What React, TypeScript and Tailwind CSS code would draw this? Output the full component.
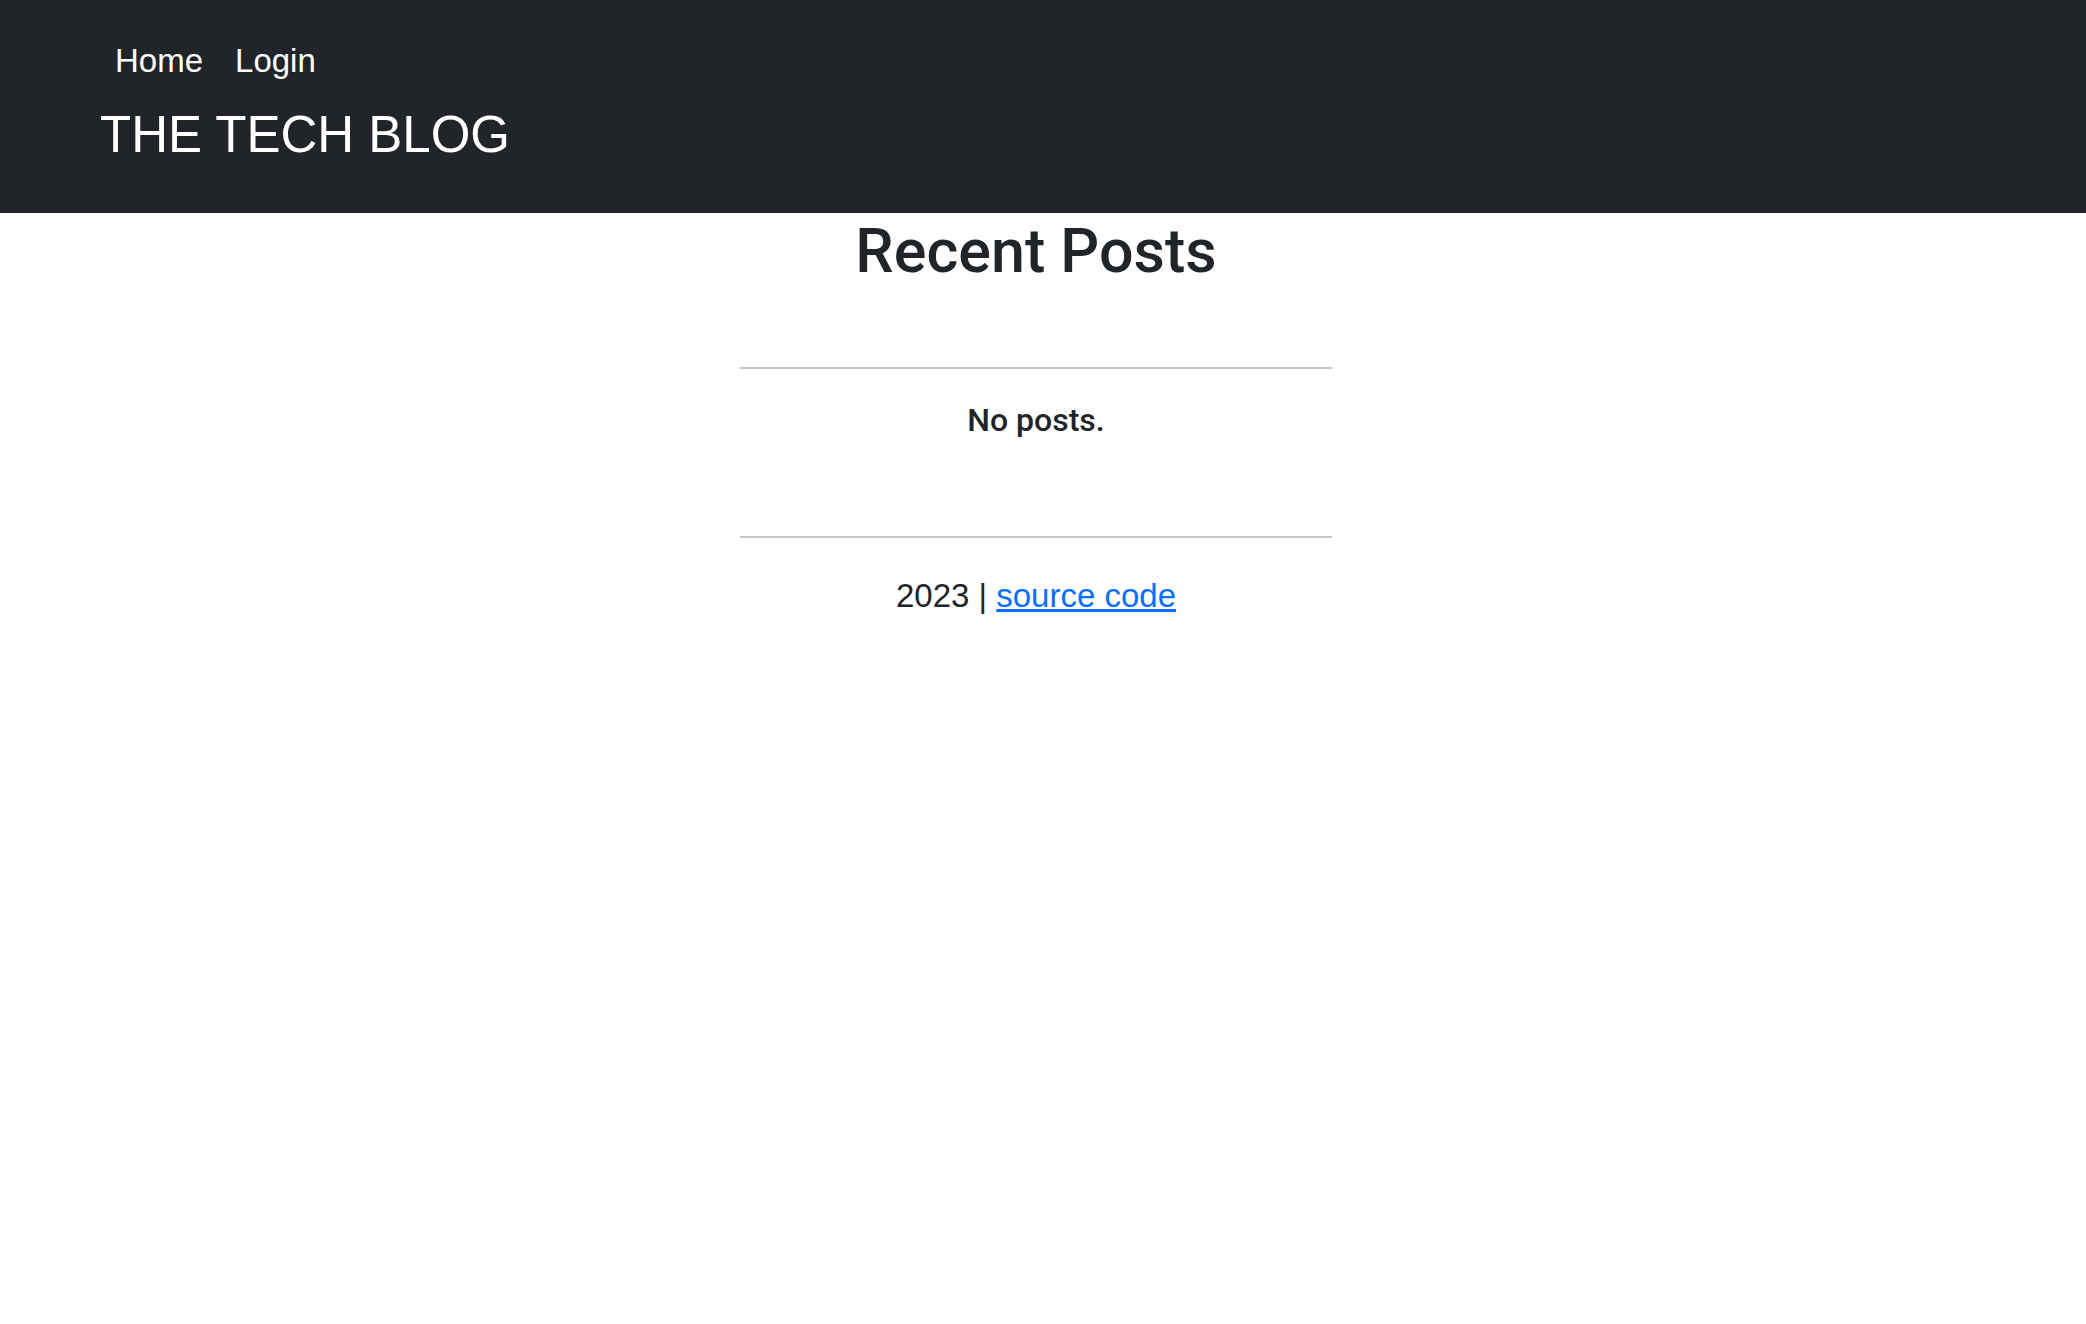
import React from 'react';

const navLinks = ['Home', 'Login'];

// Top bar with nav links and the blog title
const Header = () => (
  <header className="bg-[#212529] text-white h-[213px] pl-[99px] pt-[37px]">
    <nav className="flex">
      {navLinks.map((link) => (
        <a key={link} href="#" className="px-4 text-[33px] leading-[48px] text-white">
          {link}
        </a>
      ))}
    </nav>
    <div className="mt-[11px] text-[51px] leading-[78px] pl-[1px]">THE TECH BLOG</div>
  </header>
);

export default function App() {
  return (
    <div className="min-h-screen bg-white text-[#212529] font-['Liberation_Sans',Arial,sans-serif]">
      <Header />
      <main className="w-[2072px] flex flex-col items-center text-center">
        <h1 className="mt-[3px] text-[61px] leading-[71px] font-medium font-['Roboto',sans-serif]">
          Recent Posts
        </h1>
        <hr className="mt-[80px] w-[592px] border-0 border-t-2 border-[#c6c6c6]" />
        <p className="mt-[33px] text-[32px] leading-[37px] font-medium font-['Roboto',sans-serif]">
          No posts.
        </p>
        <hr className="mt-[97px] w-[592px] border-0 border-t-2 border-[#c6c6c6]" />
        <footer className="mt-[34px] text-[33px] leading-[48px]">
          2023 | <a href="#" className="text-[#0d6efd] underline">source code</a>
        </footer>
      </main>
    </div>
  );
}
